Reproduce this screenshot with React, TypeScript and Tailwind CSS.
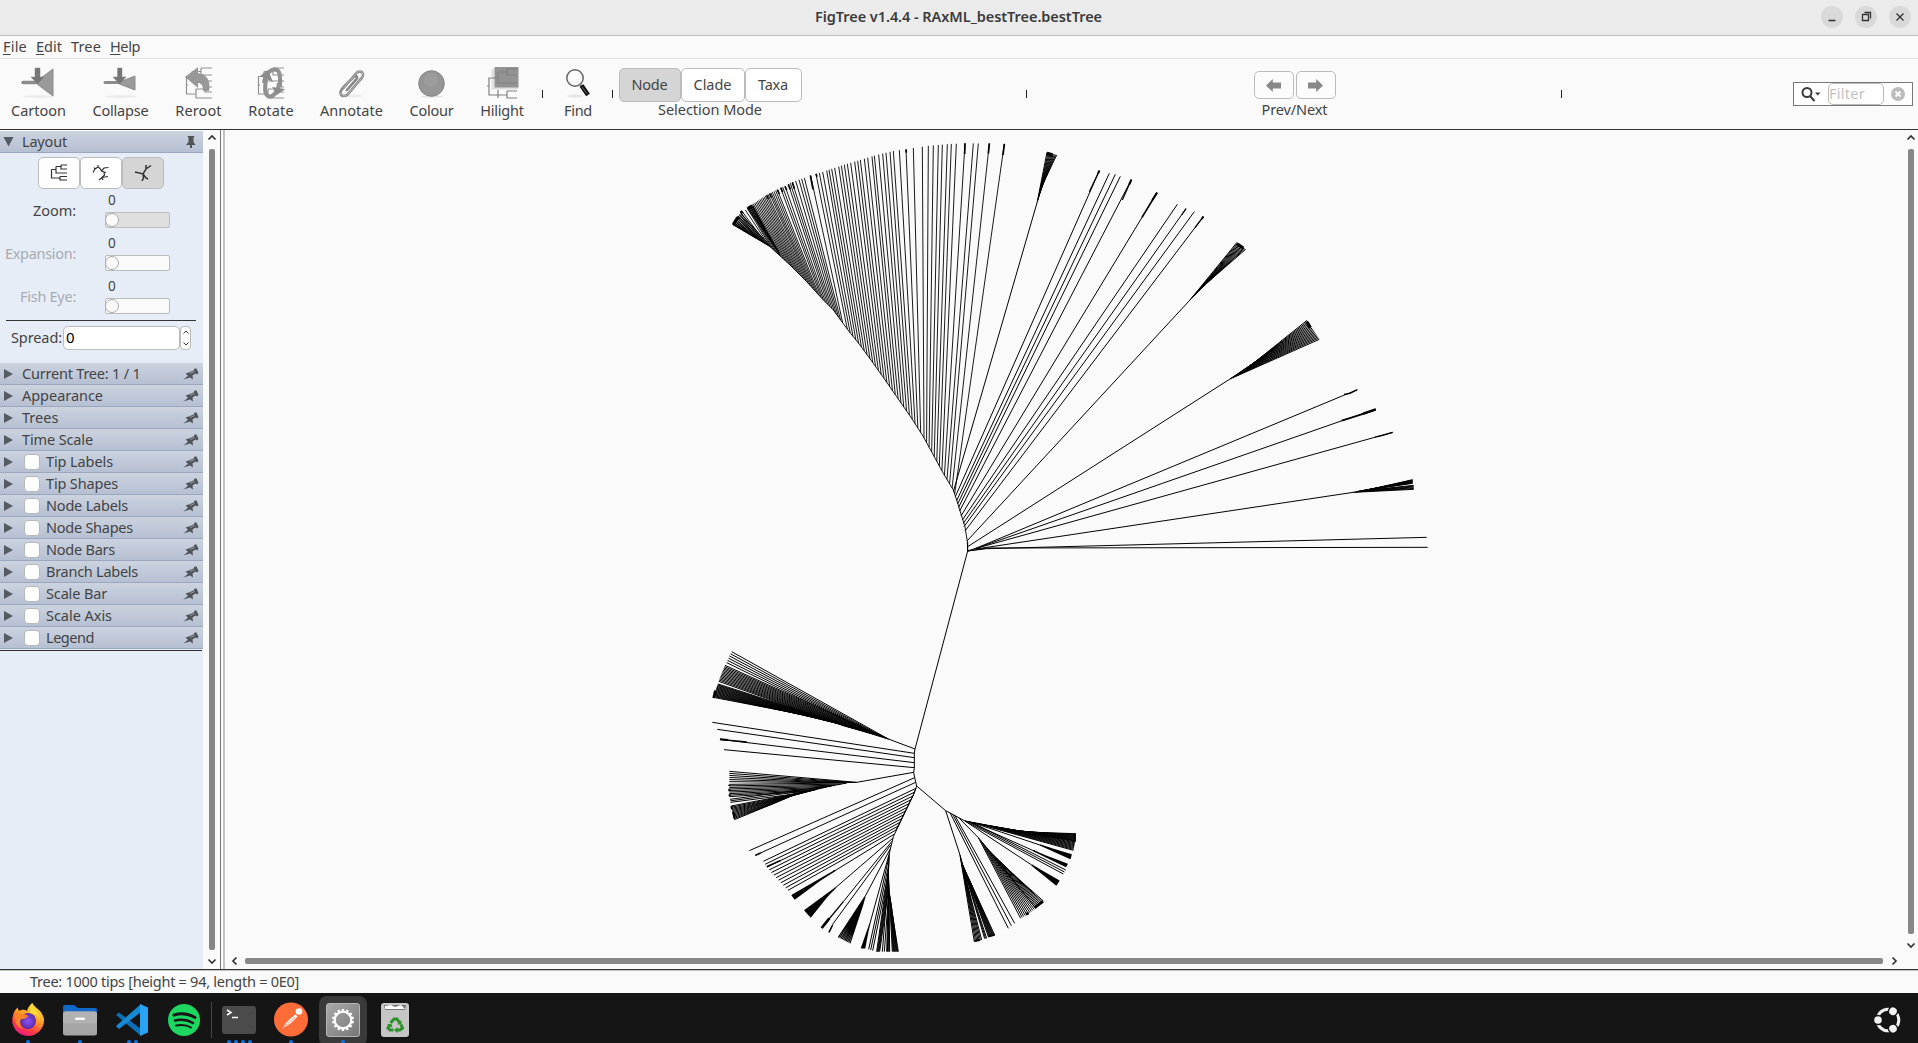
import { useLayoutEffect, useRef, type ReactNode } from "react";

/* Text whose tracking is adjusted so that the run fills a given width. */
function T({ w, children, className = "" }: { w: number; children: string; className?: string }) {
  const ref = useRef<HTMLSpanElement>(null);
  useLayoutEffect(() => {
    const el = ref.current;
    if (!el) return;
    el.style.letterSpacing = "0px";
    const natural = el.getBoundingClientRect().width;
    el.style.letterSpacing = `${(w - natural) / children.length}px`;
  }, [w, children]);
  return (
    <span ref={ref} className={`inline-block -translate-y-px whitespace-pre ${className}`}>
      {children}
    </span>
  );
}

type P = [number, number];

/* Point at fraction t of a polyline, by length. */
function along(line: P[], t: number): P {
  const lens = line.slice(1).map((p, i) => Math.hypot(p[0] - line[i][0], p[1] - line[i][1]));
  let d = t * lens.reduce((a, b) => a + b, 0);
  for (let i = 0; i < lens.length; i++) {
    if (d <= lens[i] || i === lens.length - 1) {
      const k = lens[i] ? d / lens[i] : 0;
      return [line[i][0] + (line[i + 1][0] - line[i][0]) * k, line[i][1] + (line[i + 1][1] - line[i][1]) * k];
    }
    d -= lens[i];
  }
  return line[0];
}

const poly = (pts: P[]) => "M" + pts.map((p) => `${p[0].toFixed(1)} ${p[1].toFixed(1)}`).join("L");

function fan(spine: P[], tips: P[], n: number): string {
  let d = spine.length > 1 ? poly(spine) : "";
  for (let i = 0; i < n; i++) {
    const t = n > 1 ? i / (n - 1) : 0;
    d += poly([spine.length > 1 ? along(spine, t) : spine[0], along(tips, t)]);
  }
  return d;
}

/* Coordinate frames of the parts of the tree, three units per pixel. */
const frame = (ox: number, oy: number) => `translate(${ox} ${oy}) scale(0.33333)`;

const upperSpine: P[] = [[773, 1263], [772, 1235], [765, 1190], [757, 1165], [740, 1110], [730, 1080], [700, 1030], [640, 920], [605, 865], [560, 800], [520, 742], [490, 700], [450, 645], [410, 595], [370, 540], [340, 510], [290, 455], [240, 405], [180, 350], [130, 320], [68, 283]];
const crown: P[] = [[68, 283], [80, 262], [100, 245], [120, 228], [170, 195], [210, 175], [250, 155], [300, 138], [340, 125], [400, 105], [450, 90], [500, 75], [550, 63], [610, 54], [660, 47], [720, 42], [765, 40], [883, 41]];
const yAt = (line: P[], x: number) => {
  for (let i = 1; i < line.length; i++) {
    const [a, b] = [line[i - 1], line[i]];
    if (x <= b[0]) return a[1] + ((b[1] - a[1]) * (x - a[0])) / (b[0] - a[0]);
  }
  return line[line.length - 1][1];
};
const spineUp = upperSpine.slice().reverse();
const crownGroups: { tips: number[]; from: number; to: number }[] = [
  { tips: [883, 838, 805, 790, 765, 739, 724, 712, 697, 685, 670, 655, 637], from: 734, to: 642 },
  { tips: [610, 588, 568, 550, 540, 528, 518, 506, 493, 486, 473, 463, 451, 443, 434, 422, 412, 403, 394, 386, 374, 365, 357, 350, 338, 328, 318], from: 632, to: 412 },
  { tips: [302, 283, 275, 267, 257, 247, 241, 235, 225, 218, 212, 202, 197, 192, 187, 183, 179, 174, 170, 166, 162, 158, 154, 150, 146, 142, 138, 134, 130, 127], from: 398, to: 212 },
  { tips: [124, 121, 118, 115, 112, 106, 98, 94, 89, 84, 80, 77, 74, 71, 68], from: 208, to: 125 },
];
let crownPath = poly(upperSpine);
for (const g of crownGroups) {
  g.tips.forEach((x, i) => {
    const sx = g.from + ((g.to - g.from) * i) / (g.tips.length - 1);
    crownPath += poly([[x, yAt(crown, x)], [sx, yAt(spineUp, sx)]]);
  });
}
const crownThick: [P, P][] = [
  [[883, 42], [879, 75]], [[838, 40], [835, 70]], [[765, 40], [764, 72]], [[301, 136], [309, 178]], [[247, 157], [253, 176]],
  [[235, 163], [241, 178]], [[212, 173], [218, 186]], [[202, 179], [208, 192]], [[588, 59], [589, 68]], [[318, 131], [321, 140]], [[225, 169], [230, 180]], [[179, 191], [184, 202]], [[170, 196], [175, 206]],
];

const rightLines: [P, P, P | null][] = [
  [[16, 1100], [448, 122], [418, 185]], [[20, 1112], [478, 130], null], [[23, 1122], [496, 133], null], [[26, 1132], [511, 139], null],
  [[29, 1143], [544, 149], [517, 210]], [[33, 1158], [621, 188], [576, 262]], [[37, 1170], [682, 223], null], [[40, 1180], [708, 236], [695, 255]],
  [[42, 1190], [733, 245], null], [[45, 1203], [760, 260], [735, 293]],
];

function Tree() {
  return (
    <svg className="block h-full w-full overflow-visible" viewBox="225 130 1678 820" preserveAspectRatio="none" fill="none" stroke="#000" strokeWidth="3">
      <g transform={frame(710, 130)}>
        <path d={crownPath} strokeWidth="2.7" />
        {crownThick.map((s, i) => <path key={i} d={poly(s)} strokeWidth="5" />)}
        <path d={fan([[208, 370], [165, 295]], [[113, 236], [128, 228]], 6)} />
        <path d={fan([[180, 348], [130, 318], [95, 297]], [[92, 250], [68, 283]], 12)} />
        <path d="M70 283L82 264L88 262M92 249L98 244M113 236L126 227" strokeWidth="9" />
        <path d="M773 1235V1263L615 1857" />
      </g>
      <g transform={frame(950, 130)}>
        <path d={poly([[10, 1085], [262, 215]])} />
        <path d={fan([[262, 215], [276, 168]], [[291, 67], [304, 71], [320, 75]], 10)} />
        <path d="M291 70L308 74" strokeWidth="9" />
        {rightLines.map(([a, b, c], i) => (
          <g key={i}>
            <path d={poly([a, b])} />
            {c && <path d={poly([c, b])} strokeWidth={i === 5 ? 5 : 3.6} />}
          </g>
        ))}
        <path d="M607 210L621 188M538 163L544 149M755 267L760 260M444 131L448 122" strokeWidth="6" />
        <path d={poly([[51, 1233], [720, 510]])} />
        <path d={fan([[720, 510], [765, 464]], [[861, 337], [887, 358]], 12)} />
        <path d="M861 341L880 354" strokeWidth="9" />
      </g>
      <g transform={frame(1200, 230)}>
        <path d={poly([[-697, 950], [90, 447]])} />
        <path d={fan([[90, 447], [160, 400]], [[358, 328], [321, 271]], 18)} />
        <path d="M320 275L331 292" strokeWidth="9" />
        <path d="M-697 963L-670 954L472 479M-672 955L527 537M-675 956L578 607M-672 957L460 787M-697 963L-640 956L680 922M-697 963L-640 954L683 952" />
        <path d="M432 493L450 490L472 479M525 621L545 617L578 607" strokeWidth="3.5" />
        <path d="M425 572L480 555L527 539" strokeWidth="5" />
        <path d="M490 551L527 538" strokeWidth="7" />
        <path d={fan([[460, 787], [500, 781]], [[641, 778], [641, 766]], 6)} />
        <path d={fan([[470, 785], [520, 776]], [[638, 760], [638, 749]], 8)} />
      </g>
      <g transform={frame(700, 640)}>
        <path d="M645 327L643 340V385L641 397L644 413L650 438L640 465L580 590L568 640L565 700L568 760L576 810M650 438L737 512" />
        <path d={poly([[645, 327], [565, 297]])} />
        <path d={fan([[565, 297], [480, 262]], [[95, 35], [88, 49], [80, 68]], 6)} />
        <path d={fan([[565, 297], [500, 277], [430, 257]], [[75, 76], [62, 108], [56, 124]], 14)} />
        <path d={fan([[520, 282], [430, 255], [300, 222]], [[54, 132], [47, 150], [40, 172]], 17)} />
        <path d="M46 152L41 174" strokeWidth="8" />
        <path d="M37 247L643 340M52 268L643 353M60 298L643 368M72 329L643 383" />
        <path d="M60 298L140 306" strokeWidth="4" />
        <path d="M60 298L84 300" strokeWidth="6" />
        <path d="M641 397L470 427" />
        <path d={fan([[470, 427], [400, 428]], [[88, 394], [88, 425]], 6)} />
        <path d={fan([[440, 429], [300, 456]], [[88, 433], [88, 470]], 9)} />
        <path d={fan([[400, 436], [300, 460]], [[90, 478], [92, 487]], 3)} />
        <path d={fan([[350, 448], [280, 466], [210, 495]], [[94, 498], [98, 518], [103, 539]], 13)} />
        <path d="M88 434V438M88 446V454M89 463V469M94 498L96 508M99 516L104 536" strokeWidth="6" />
        <path d="M148 632L644 413M166 646L647 427" />
        <path d={fan([[648, 445], [640, 465], [588, 570]], [[190, 664], [200, 680], [211, 694], [264, 751]], 12)} />
        <path d="M200 680L242 661M166 646L182 639" strokeWidth="4.500" />
        <path d="M405 692L582 583M408 742L578 595M430 785L575 605M400 850L387 877M400 850L572 615M495 770L570 628M510 850L568 640" />
        <path d={fan([[405, 692], [370, 713]], [[275, 767], [283, 778]], 6)} strokeWidth="4" />
        <path d={fan([[408, 742], [385, 765]], [[313, 812], [331, 832]], 9)} strokeWidth="3.3" />
        <path d="M430 785L365 864" strokeWidth="4" />
        <path d="M388 835L365 864" strokeWidth="8" />
        <path d="M397 857L387 877" strokeWidth="4" />
        <path d={fan([[495, 770], [488, 795]], [[415, 892], [450, 910]], 10)} strokeWidth="3.3" />
        <path d={fan([[510, 850], [505, 868]], [[484, 925], [494, 925]], 5)} strokeWidth="3.5" />
        <path d={fan([[567, 650], [565, 700]], [[506, 928], [518, 932]], 3)} />
        <path d={fan([[565, 690], [564, 760]], [[530, 935], [539, 935]], 5)} />
        <path d={fan([[565, 710], [566, 760]], [[547, 935], [553, 935]], 2)} />
        <path d={fan([[566, 730], [567, 780]], [[560, 935], [569, 935]], 5)} />
        <path d={fan([[568, 760], [574, 800], [580, 840]], [[577, 935], [595, 935]], 9)} />
      </g>
      <g transform={frame(900, 740)}>
        <path d="M137 212L195 243L290 262M137 212L180 345M150 218L325 565M158 223L334 557M165 227L344 550M175 232L235 293M195 243L395 375" />
        <path d={fan([[180, 345], [190, 385]], [[223, 605], [245, 600]], 7)} />
        <path d={fan([[185, 365], [195, 395]], [[254, 596], [260, 595]], 3)} />
        <path d={fan([[188, 375], [215, 435]], [[266, 592], [284, 585]], 9)} />
        <path d="M223 603L240 600M266 589L284 584" strokeWidth="6" />
        <path d={fan([[235, 293], [300, 370]], [[362, 535], [384, 522], [407, 505]], 11)} />
        <path d={fan([[270, 335], [350, 412]], [[407, 505], [430, 483]], 9)} />
        <path d="M378 523L386 519M404 503L429 484" strokeWidth="8" />
        <path d={fan([[395, 375], [415, 387]], [[470, 436], [478, 423]], 7)} strokeWidth="4" />
        <path d={fan([[195, 243], [215, 247]], [[490, 402], [497, 390]], 3)} />
        <path d="M210 247L400 332M215 247L420 315" />
        <path d={fan([[400, 332], [430, 345]], [[499, 380], [503, 373]], 4)} strokeWidth="4" />
        <path d={fan([[420, 315], [450, 325]], [[512, 356], [515, 345]], 5)} strokeWidth="4" />
        <path d={fan([[220, 248], [330, 268]], [[520, 331], [526, 303]], 11)} />
        <path d={fan([[280, 260], [340, 271], [400, 277]], [[527, 303], [527, 281]], 11)} />
        <path d="M524 280V305" strokeWidth="7" />
      </g>
    </svg>
  );
}

function Chevron({ dir }: { dir: "up" | "down" | "left" | "right" }) {
  const d = { up: "M1.5 6.5L5 3L8.500 6.500", down: "M1.500 3.500L5 7L8.500 3.500", left: "M6.500 1.500L3 5L6.500 8.500", right: "M3.500 1.500L7 5L3.500 8.500" }[dir];
  return (
    <svg className="block size-[10px]" viewBox="0 0 10 10" fill="none" stroke="#333" strokeWidth="1.7">
      <path d={d} />
    </svg>
  );
}

const miniTree = (
  <path d="M3 18H1.500V9.500H7M1.500 18V27H11M7 4.500V14M7 4.500H16M7 14H27M16 1H27M16 1V8H27M11 22V31H27M11 22H20M20 20H27M20 20V25H27" fill="none" stroke="#929292" strokeWidth="1.200" />
);

const toolIcons: Record<string, ReactNode> = {
  Cartoon: (
    <>
      <ellipse cx="18" cy="29.500" rx="16" ry="1.500" fill="#ececec" />
      <path d="M2 15.500H14" stroke="#8b8b8b" strokeWidth="3.500" strokeLinecap="round" />
      <path d="M14 15.500L32 2V29Z" fill="#9a9a9a" stroke="#8c8c8c" strokeLinejoin="round" />
      <path d="M14 1H19V10H23L16.500 17L10 10H14Z" fill="#757575" stroke="#858585" strokeWidth=".5" />
    </>
  ),
  Collapse: (
    <>
      <ellipse cx="18" cy="29.500" rx="16" ry="1.500" fill="#ececec" />
      <path d="M2 15.500H16" stroke="#8b8b8b" strokeWidth="3" strokeLinecap="round" />
      <path d="M14 16L32 9V23Z" fill="#9a9a9a" stroke="#8c8c8c" strokeLinejoin="round" />
      <path d="M14.500 1H19V10H23L16.500 17L10 10H14.500Z" fill="#757575" stroke="#858585" strokeWidth=".5" />
    </>
  ),
  Reroot: (
    <>
      <g transform="translate(4 0)">{miniTree}</g>
      <path d="M4 10L17 0V6C26 7 30 14 28 24H22C22 18 20 16 17 16V21Z" fill="#989898" />
    </>
  ),
  Rotate: (
    <>
      <g transform="translate(4 0)">{miniTree}</g>
      <path d="M11 16C12 7 18 1 24 3C28 5 27 14 27 20" fill="none" stroke="#919191" strokeWidth="4" />
      <path d="M26 16C25 25 20 31 15 29C11 27 12 20 13 12" fill="none" stroke="#919191" strokeWidth="4" />
      <path d="M7 9L15 3L20 15ZM19 20L32 22L24 28Z" fill="#8b8b8b" />
    </>
  ),
  Annotate: (
    <>
      <ellipse cx="20" cy="29" rx="9" ry="1.500" fill="#ececec" />
      <g fill="none" strokeLinecap="round">
        <path d="M9.500 21L22 6.500C24 4 28 3.500 29 7C29.500 9 28 11 26 13L15 26C12 30 7 30 6.500 26C6 24 8 22 10 19.500L20 9.500C22 8 24 10 22.500 12L13 23" stroke="#868686" strokeWidth="2.600" />
        <path d="M9.500 21L22 6.500C24 4 28 3.500 29 7C29.500 9 28 11 26 13L15 26C12 30 7 30 6.500 26" stroke="#c5c5c5" strokeWidth=".8" />
      </g>
    </>
  ),
  Colour: (
    <>
      <ellipse cx="18" cy="29.500" rx="11" ry="1.200" fill="#e2e2e2" />
      <circle cx="17.500" cy="16.500" r="12.800" fill="#969696" stroke="#858585" strokeWidth="1" />
      <circle cx="17" cy="13" r="7" fill="#a0a0a0" opacity=".6" />
    </>
  ),
  Hilight: (
    <>
      <path d="M9 2V21H34" fill="none" stroke="#e0e0e0" strokeWidth="3" />
      <rect x="10.500" width="24" height="20.500" fill="#939393" />
      <path d="M3 19H5V11H14M5 19V28H14M14 5V16H33M14 5H23M23 2H33M23 2V8H33M14 23V28M14 23V31M23 24H33M23 24V31H33M14 28H23" fill="none" stroke="#808080" strokeWidth="1.200" />
    </>
  ),
  Find: (
    <>
      <ellipse cx="15" cy="29" rx="8" ry="1.500" fill="#e5e5e5" />
      <circle cx="15" cy="11" r="8.200" fill="#f5f5f5" stroke="#666" strokeWidth="1.500" />
      <circle cx="14" cy="9" r="5" fill="#fff" />
      <path d="M20 17L22 20" stroke="#777" strokeWidth="1.700" />
      <path d="M21.500 18.500L28 28" stroke="#111" strokeWidth="4.500" />
      <path d="M22 20L27 26.500" stroke="#999" strokeWidth=".7" />
    </>
  ),
};

function Tool({ name, w, className }: { name: string; w: number; className: string }) {
  return (
    <div className={`flex shrink-0 flex-col items-center pt-[8px] ${className}`}>
      <svg className="block h-[33px] w-[36px]" viewBox="0 0 36 33">{toolIcons[name]}</svg>
      <div className="mt-[1px] h-5 leading-5"><T w={w}>{name}</T></div>
    </div>
  );
}

const Tick = ({ className }: { className: string }) => <div className={`mt-[31px] h-2 w-px shrink-0 bg-[#222] ${className}`} />;

function Pin({ up }: { up?: boolean }) {
  return (
    <svg className="block h-[14px] w-[16px]" viewBox="0 0 16 14">
      {up ? (
        <path d="M4.500 1H11.500L10.500 3V7L12.500 10H9V13H7V10H3L5.500 7V3Z" fill="#505459" />
      ) : (
        <g>
          <path d="M.5 12.500L5 8.800L2.500 6.500L6.500 5.200L11 3.200L11.500 1.500H13.500L15.500 6L14 7.500L12.500 6.500L9.500 8.500L10 12.500L7 10.500Z" fill="#505459" />
          <path d="M7 6.500L11.500 4.500" stroke="#a3adbc" strokeWidth=".8" />
        </g>
      )}
    </svg>
  );
}

const rows: { label: string; w: number; check?: boolean }[] = [
  { label: "Current Tree: 1 / 1", w: 118.5 },
  { label: "Appearance", w: 81 },
  { label: "Trees", w: 36.5 },
  { label: "Time Scale", w: 71 },
  { label: "Tip Labels", w: 67 },
  { label: "Tip Shapes", w: 72 },
  { label: "Node Labels", w: 82 },
  { label: "Node Shapes", w: 87 },
  { label: "Node Bars", w: 69 },
  { label: "Branch Labels", w: 92 },
  { label: "Scale Bar", w: 61 },
  { label: "Scale Axis", w: 66 },
  { label: "Legend", w: 48 },
].map((r, i) => ({ ...r, check: i > 3 }));

function Slider({ label, w, on }: { label: string; w: number; on?: boolean }) {
  return (
    <div className="flex h-[43px]">
      <div className={`flex w-[76px] justify-end pt-[11px] leading-5 ${on ? "" : "text-[#a9abaf]"}`}><T w={w}>{label}</T></div>
      <div className="ml-[29px] w-[65px]">
        <div className="h-[22px] pl-[3px] text-[13.500px] leading-[20px]">0</div>
        <div className={`flex h-4 items-center rounded-[2px] border border-[#bcbcbc] ${on ? "bg-[#dfdfdf]" : "bg-[#fafafa]"}`}>
          <div className="-ml-px size-[14px] rounded-full border border-[#aaa] bg-[#fafafa]" />
        </div>
      </div>
    </div>
  );
}

function Side() {
  return (
    <div className="flex w-[203px] shrink-0 flex-col bg-[#e6edf7]">
      <div className="h-px bg-[#fafafa]" />
      <div className="flex h-[22px] items-center border-b border-[#9aa7bf] bg-linear-to-b from-[#ccd3e0] to-[#b5c0d2]">
        <svg className="ml-[3px] size-[11px]" viewBox="0 0 11 11"><path d="M.5 1H10.500L5.500 10.500Z" fill="#565b63" /></svg>
        <div className="ml-[8px] flex-1 leading-5"><T w={45}>Layout</T></div>
        <div className="mr-[4px]"><Pin up /></div>
      </div>
      <div className="flex h-[210px] flex-col pt-[4px]">
        <div className="flex h-8 pl-[38px]">
          {[0, 1, 2].map((i) => (
            <div key={i} className={`flex h-8 w-[42px] items-center justify-center rounded-[5px] border border-[#bbb] ${i === 2 ? "bg-[#d5d5d5]" : "bg-white"}`}>
              <svg className="h-[18px] w-[18px]" viewBox="0 0 18 18" fill="none" stroke="#333" strokeWidth="1.200">
                {i === 0 && <path d="M1.500 5.500V14H10M1.500 5.500H6M6 2.500V9H17M6 2.500H11M11 1H17M11 1V5H17M10 12.500H17M10 12.500V16H17" />}
                {i === 1 && <path d="M1 8.500L3 5L6 3L8 4.500L9.500 7L12 8L12.500 11L10 13.500L7 16M6 3V1M3 5L2 3.500M9.500 7L12 4L16.500 3.500M10 13.500L11 16M10 13.500L16 12.500M12 8L14 8.500" />}
                {i === 2 && <path d="M1 8L9 10L12 5L17 1.500M12 5V1M9 10L12 14L14 15M9 10L9.500 14L8 17" strokeWidth="1.500" />}
              </svg>
            </div>
          ))}
        </div>
        <div className="mt-[1px]">
          <Slider label="Zoom:" w={43} on />
          <Slider label="Expansion:" w={71} />
          <Slider label="Fish Eye:" w={56} />
        </div>
        <div className="mt-px ml-[6px] h-px w-[190px] shrink-0 bg-[#333]" />
        <div className="mt-[5px] flex h-6 items-center pl-[11px]">
          <div className="w-[52px] leading-5"><T w={51}>Spread:</T></div>
          <div className="flex h-6 w-[117px] items-center rounded-[5px] border border-[#bbb] bg-white pb-[2px] pl-[2px] text-[15px] text-black">0</div>
          <div className="flex h-6 w-[11px] flex-col items-center justify-between rounded-[4px] border border-[#bbb] bg-white py-[2px]">
            <svg className="size-[6px]" viewBox="0 0 6 6" fill="none" stroke="#333"><path d="M.5 4.500L3 2L5.500 4.500" /></svg>
            <svg className="size-[6px]" viewBox="0 0 6 6" fill="none" stroke="#333"><path d="M.5 1.500L3 4L5.500 1.500" /></svg>
          </div>
        </div>
      </div>
      {rows.map((r) => (
        <div key={r.label} className="flex h-[22px] shrink-0 items-center border-b border-[#9aa7bf] bg-linear-to-b from-[#ccd3e0] to-[#b5c0d2]">
          <svg className="mt-px ml-[4px] h-[10px] w-[9px]" viewBox="0 0 9 10"><path d="M0 0L9 5L0 10Z" fill="#565b63" /></svg>
          {r.check && <div className="ml-[11px] size-4 rounded-[4px] border border-[#b8b8b8] bg-white" />}
          <div className={`flex-1 leading-5 ${r.check ? "ml-[6px]" : "ml-[9px]"}`}><T w={r.w}>{r.label}</T></div>
          <div className="mr-[4px]"><Pin /></div>
        </div>
      ))}
      <div className="mt-[1px] h-px w-[202px] bg-[#333]" />
    </div>
  );
}

function VBar({ thumb }: { thumb: string }) {
  return (
    <>
      <div className="mt-[3px] mb-[6px]"><Chevron dir="up" /></div>
      <div className={`w-[6px] rounded-[2px] bg-[#878787] ${thumb}`} />
      <div className="mt-[6px]"><Chevron dir="down" /></div>
    </>
  );
}

function Dock({ children, dots, className }: { children: ReactNode; dots: number; className: string }) {
  return (
    <div className={`flex h-[50px] shrink-0 flex-col items-center pt-[9px] ${className}`}>
      <svg className="block h-9 w-9 shrink-0" viewBox="0 0 36 36">{children}</svg>
      <div className="mt-[2px] flex h-[3px] gap-[3px] overflow-hidden">
        {Array.from({ length: dots }, (_, i) => <div key={i} className="size-[4px] shrink-0 rounded-full bg-[#0f74e0]" />)}
      </div>
    </div>
  );
}

const gearTeeth = Array.from({ length: 14 }, (_, i) => i * (360 / 14));

function Taskbar() {
  return (
    <div className="flex h-[50px] shrink-0 bg-[#151515]">
      <Dock dots={1} className="ml-[4px] w-[48px]">
        <defs>
          <linearGradient id="fox" x1=".8" y1="0" x2=".3" y2="1"><stop offset="0" stopColor="#ffe93b" /><stop offset=".45" stopColor="#ff9a25" /><stop offset=".75" stopColor="#ff3d43" /><stop offset="1" stopColor="#e81684" /></linearGradient>
          <radialGradient id="globe"><stop offset="0" stopColor="#8a52f5" /><stop offset="1" stopColor="#5b2ca6" /></radialGradient>
        </defs>
        <path d="M18 34A16 15.500 0 0 1 2.500 16C3 11 5 8 7.500 5.500L9 9C12 7 15 8 17 9C18 5 20 3 22.500 1C24 6 32 7 34 17A16 16 0 0 1 18 34Z" fill="url(#fox)" />
        <circle cx="18" cy="19" r="8" fill="url(#globe)" />
        <path d="M5 13C10 12 15 11 18 14C16 17 13 17 11 17C9 21 10 24 13 27C7 26 4 20 5 13Z" fill="#ff8125" />
        <path d="M22 1C23 7 29 11 30 19C29 15 25 11 20 11C20 7 20 4 22 1Z" fill="#ffdd38" />
      </Dock>
      <Dock dots={1} className="ml-[4px] w-[48px]">
        <path d="M1 6C1 3 2 3 4 3H12L16 6H33C35 6 35 7 35 9V20H1Z" fill="#1268c8" />
        <rect x="1" y="9.500" width="34" height="24" rx="2.500" fill="#a5a5a5" />
        <rect x="1" y="9.500" width="34" height="12" rx="2.500" fill="#b2b2b2" />
        <rect x="13" y="15.500" width="10" height="2.500" rx="1" fill="#fff" />
      </Dock>
      <Dock dots={2} className="ml-[4px] w-[48px]">
        <path d="M2 13L5 10.500L27 27V34Z" fill="#0a6fb8" />
        <path d="M2 24L5 27L27 10V2Z" fill="#168ad4" />
        <path d="M26 2L34 5.500V30.500L26 34Z" fill="#2aa4f2" />
      </Dock>
      <Dock dots={0} className="ml-[4px] w-[48px]">
        <circle cx="18" cy="18" r="16" fill="#1ed760" />
        <g fill="none" stroke="#151515" strokeLinecap="round"><path d="M8 13C15 11 23 12 29 15.500" strokeWidth="3" /><path d="M9 18.500C15 17 22 18 27 21" strokeWidth="2.500" /><path d="M10 23.500C15 22.500 21 23 25 25.500" strokeWidth="2" /></g>
      </Dock>
      <div className="mt-[9px] ml-[3px] h-[36px] w-px bg-[#454545]" />
      <Dock dots={4} className="ml-[3px] w-[48px]">
        <rect x="1" y="4" width="34" height="28" rx="3" fill="#4b4b4b" />
        <path d="M6 8L10 10.500L6 13M11 15.500H17" fill="none" stroke="#fff" strokeWidth="1.500" />
      </Dock>
      <Dock dots={1} className="ml-[4px] w-[48px]">
        <circle cx="18" cy="17.500" r="17" fill="#ff6c37" />
        <circle cx="26" cy="9.500" r="3.300" fill="#fff" />
        <path d="M22 12L24.500 14.500L18 21L9 27L13 21Z" fill="#fff" />
        <path d="M10 26L22 15M14 18L23 12" stroke="#ff6c37" strokeWidth=".7" />
      </Dock>
      <Dock dots={1} className="mt-[3px] ml-[4px] -mb-[3px] w-[48px] rounded-[8px] bg-[#3a3a3a] !pt-[6px]">
        <defs><linearGradient id="gearbg" x1="0" y1="0" x2="1" y2="1"><stop offset="0" stopColor="#aaa" /><stop offset="1" stopColor="#777" /></linearGradient></defs>
        <rect x="1.500" y="1.500" width="33" height="33" rx="2.500" fill="url(#gearbg)" stroke="#b5b5b5" />
        <circle cx="18" cy="18" r="8.300" fill="none" stroke="#fff" strokeWidth="2.200" />
        {gearTeeth.map((a) => <rect key={a} x="16.800" y="7" width="2.400" height="3.500" fill="#fff" transform={`rotate(${a} 18 18)`} />)}
      </Dock>
      <Dock dots={0} className="ml-[4px] w-[48px]">
        <rect x="4" y="1" width="28" height="34" rx="3" fill="#c6c6c6" />
        <path d="M7 3H29L28 8H8Z" fill="#777" />
        <path d="M8 4L14 3L18 5L24 3L28 7H8Z" fill="#fff" />
        <g fill="none" stroke="#2b922b" strokeWidth="3"><path d="M13.500 21L17 17H20L22.500 20.500" /><path d="M24 22.500L25.500 26L23 28H19.500" /><path d="M16.500 28H13L11 26L13 22.500" /></g>
        <path d="M24.500 18V22.500H20ZM20.500 25V31L17 28ZM10 22H14.500L15.500 26Z" fill="#2b922b" />
      </Dock>
      <div className="flex-1" />
      <svg className="mt-[13px] mr-[16px] h-[28px] w-[28px]" viewBox="0 0 28 28">
        <circle cx="14" cy="14" r="10.800" fill="none" stroke="#f2f2f2" strokeWidth="3" />
        {[180, 300, 60].map((a) => (
          <g key={a} transform={`rotate(${a} 14 14)`}><circle cx="24" cy="14" r="5.200" fill="#151515" /><circle cx="24" cy="14" r="3.800" fill="#f2f2f2" /></g>
        ))}
      </svg>
    </div>
  );
}

const modes = [
  { label: "Node", w: 36, cls: "w-[62px] bg-[#d5d5d5]" },
  { label: "Clade", w: 38, cls: "w-[64px] bg-white" },
  { label: "Taxa", w: 30, cls: "w-[57px] bg-white" },
];

export default function App() {
  return (
    <div className="flex h-[1043px] w-[1918px] flex-col overflow-hidden bg-[#fafafa] font-['Noto_Sans',sans-serif] text-[14.500px] text-[#444]">
      <div className="flex h-9 shrink-0 border-b border-[#bdbdbd] bg-[#ebebeb]">
        <div className="w-[815px]" />
        <div className="flex flex-1 items-center text-[14.500px] font-semibold text-[#3b3b3b]"><T w={287}>FigTree v1.4.4 - RAxML_bestTree.bestTree</T></div>
        <div className="flex items-center gap-[12px] pr-[7px] pb-[2px]">
          {["M7.500 14.500H14.500", "M7.500 8.500H13.500V14.500H7.500ZM9.500 6.500H15.500V12.500", "M7.500 7.500L14.500 14.500M14.500 7.500L7.500 14.500"].map((d) => (
            <svg key={d} className="size-[22px] rounded-full bg-[#d9d9d9]" viewBox="0 0 22 22" fill="none" stroke="#333" strokeWidth="1.300"><path d={d} /></svg>
          ))}
        </div>
      </div>
      <div className="flex h-[23px] shrink-0 gap-[9px] border-b border-[#e0e0e0] pl-[3px] leading-[22px]">
        {([["File", 24], ["Edit", 26], ["Tree", 30], ["Help", 30]] as [string, number][]).map(([m, w]) => (
          <T key={m} w={w} className={m === "Tree" ? "" : "first-letter:underline first-letter:underline-offset-2"}>{m}</T>
        ))}
      </div>
      <div className="flex h-[71px] shrink-0 border-b border-[#333]">
        <Tool name="Cartoon" w={55} className="w-[77px]" />
        <Tool name="Collapse" w={56} className="w-[87px]" />
        <Tool name="Reroot" w={46.5} className="w-[69px]" />
        <Tool name="Rotate" w={45.5} className="w-[76px]" />
        <Tool name="Annotate" w={63} className="w-[85px]" />
        <Tool name="Colour" w={44} className="w-[75px]" />
        <Tool name="Hilight" w={43.5} className="w-[66px]" />
        <Tick className="ml-[7px]" />
        <Tool name="Find" w={28} className="w-[70px]" />
        <Tick className="-ml-px" />
        <div className="ml-[5px] flex w-[184px] shrink-0 flex-col items-center pt-[9px]">
          <div className="flex">
            {modes.map((m) => (
              <div key={m.label} className={`flex h-[34px] items-center justify-center rounded-[5px] border border-[#bbb] pt-px ${m.cls}`}><T w={m.w}>{m.label}</T></div>
            ))}
          </div>
          <div className="-mt-[2px] leading-5"><T w={104}>Selection Mode</T></div>
        </div>
        <Tick className="ml-[224px]" />
        <div className="ml-[226px] flex w-[83px] shrink-0 flex-col items-center pt-[12px]">
          <div className="flex gap-[2px]">
            {["M5 0V3H11V8H5V11L0 5.500Z", "M6 0V3H0V8H6V11L11 5.500Z"].map((d) => (
              <div key={d} className="flex h-7 w-10 items-center justify-center rounded-[5px] border border-[#bbb] bg-[#fcfcfc]">
                <svg className="h-[13px] w-[15px]" viewBox="0 0 11 11" preserveAspectRatio="none"><path d={d} fill="#888" /></svg>
              </div>
            ))}
          </div>
          <div className="mt-[1px] leading-5"><T w={66}>Prev/Next</T></div>
        </div>
        <Tick className="ml-[225px]" />
        <div className="flex-1" />
        <div className="mt-[23px] mr-[5px] flex h-6 w-[120px] items-center border border-[#777] bg-white">
          <svg className="ml-[7px] h-[16px] w-[20px]" viewBox="0 0 20 16"><circle cx="6" cy="6.500" r="4.500" fill="none" stroke="#3a3a3a" strokeWidth="2" /><path d="M9 10L13.500 15" stroke="#3a3a3a" strokeWidth="2" /><path d="M14 6.500H19.500L16.700 9.500Z" fill="#3a3a3a" /></svg>
          <div className="ml-[7px] flex h-[22px] w-[56px] items-center rounded-[5px] border border-[#bbb] pt-px text-[#c2c2c2]"><T w={36}>Filter</T></div>
          <svg className="ml-[7px] size-[14px]" viewBox="0 0 14 14"><circle cx="7" cy="7" r="7" fill="#bcbcbc" /><path d="M4.500 4.500L9.500 9.500M9.500 4.500L4.500 9.500" stroke="#fff" strokeWidth="1.800" /></svg>
        </div>
      </div>
      <div className="flex h-[839px] shrink-0">
        <Side />
        <div className="flex w-[17px] shrink-0 flex-col items-center pl-px"><VBar thumb="h-[801px]" /></div>
        <div className="w-px shrink-0 bg-[#777]" />
        <div className="ml-[2px] w-[2px] shrink-0 bg-[#c4c4c4]" />
        <div className="flex flex-1 flex-col">
          <div className="flex h-[820px]">
            <div className="w-[1678px]"><Tree /></div>
            <div className="flex w-[15px] flex-col items-center"><VBar thumb="h-[785px]" /></div>
          </div>
          <div className="flex h-[19px] items-center pt-[3px] pl-[5px]">
            <Chevron dir="left" />
            <div className="mr-[6px] ml-[5px] h-[6px] w-[1638px] rounded-[2px] bg-[#878787]" />
            <Chevron dir="right" />
          </div>
        </div>
      </div>
      <div className="h-[2px] shrink-0 border-t border-[#333] bg-[#c4c4c4]" />
      <div className="h-[22px] shrink-0 pl-[30px] leading-[22px]"><T w={269}>Tree: 1000 tips [height = 94, length = 0E0]</T></div>
      <Taskbar />
    </div>
  );
}
